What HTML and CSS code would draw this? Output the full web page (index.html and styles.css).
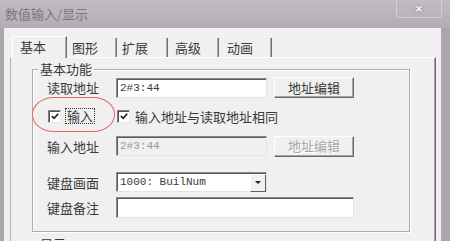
FILE: index.html
```html
<!DOCTYPE html>
<html lang="zh">
  <head>
    <meta charset="UTF-8" />
    <title>数值输入/显示</title>
    <link rel="stylesheet" href="styles.css">
  </head>
  <body>
    <div class="window">
      <div class="titlebar">
        <span class="title">数值输入/显示</span>
        <span class="close">✕</span>
      </div>
      <div class="client">
        <div class="tabs">
          <div class="tab active">基本</div>
          <div class="tab">图形</div>
          <div class="tab">扩展</div>
          <div class="tab">高级</div>
          <div class="tab last">动画</div>
        </div>
        <div class="panel">
          <fieldset class="group">
            <legend>基本功能</legend>
            <div class="group-body">
              <div class="row row-read">
                <span class="label">读取地址</span>
                <input class="field" type="text" value="2#3:44" readonly>
                <button class="btn">地址编辑</button>
              </div>
              <div class="row row-check">
                <div class="check-cell">
                  <span class="check"><svg viewBox="0 0 11 11" width="11" height="11"><polyline points="2,5 4.5,7.5 9,2.5" /></svg></span>
                  <span class="focus">输入</span>
                </div>
                <span class="check"><svg viewBox="0 0 11 11" width="11" height="11"><polyline points="2,5 4.5,7.5 9,2.5" /></svg></span>
                <span class="check-text">输入地址与读取地址相同</span>
                <!-- 红色圈注 -->
                <span class="mark"></span>
              </div>
              <div class="row row-write">
                <span class="label">输入地址</span>
                <input class="field" type="text" value="2#3:44" disabled>
                <button class="btn" disabled>地址编辑</button>
              </div>
              <div class="row row-combo">
                <span class="label">键盘画面</span>
                <div class="combo">
                  <span class="combo-text">1000: BuilNum</span>
                  <span class="combo-arrow"></span>
                </div>
              </div>
              <div class="row row-note">
                <span class="label">键盘备注</span>
                <input class="field wide" type="text" value="">
              </div>
            </div>
          </fieldset>
          <fieldset class="group next">
            <legend>显示</legend>
            <div class="group-body"></div>
          </fieldset>
        </div>
      </div>
    </div>
  </body>
</html>
```

FILE: styles.css
```css
* {
  box-sizing: border-box;
}

body {
  margin: 0;
  width: 450px;
  height: 241px;
  overflow: hidden;
  font-family: "Noto Sans CJK SC", sans-serif;
  font-size: 13px;
  color: #3a3a3a;
}

.window {
  display: flex;
  flex-direction: column;
  height: 241px;
  background: #aca5ae;
}

/* 标题栏 */
.titlebar {
  height: 28px;
  flex: none;
  display: flex;
  justify-content: space-between;
  align-items: flex-start;
  padding-left: 5px;
  background: linear-gradient(#c2bbc3, #b3acb5);
}

.title {
  line-height: 27px;
  color: #7d7781;
}

.close {
  width: 46px;
  height: 18px;
  margin-right: 8px;
  border: 1px solid #d3cdd5;
  border-top: none;
  border-radius: 0 0 4px 4px;
  display: flex;
  align-items: center;
  justify-content: center;
  font-size: 9px;
  font-weight: bold;
  color: #fff;
  text-shadow: 0 0 2px #666;
}

.client {
  flex: 1;
  display: flex;
  flex-direction: column;
  margin: 0 9px 0 4px;
  padding: 7px 5px 0 6px;
  background: #f0f0f0;
}

/* 选项卡 */
.tabs {
  display: flex;
  align-items: flex-end;
  height: 22px;
  padding-left: 2px;
}

.tab {
  width: 50px;
  height: 19px;
  line-height: 19px;
  padding-left: 5px;
  border-right: 1px solid #707070;
  box-shadow: inset -1px 0 0 #a8a8a8;
}

.tab:nth-child(3),
.tab:nth-child(4) {
  width: 51px;
}

.tab:nth-child(4) {
  padding-left: 7px;
}

.tab.last {
  width: 53px;
  padding-left: 8px;
}

.tab.active {
  width: 55px;
  height: 22px;
  line-height: 19px;
  padding-left: 7px;
  border-top: 1px solid #fff;
  border-left: 1px solid #fff;
  margin-bottom: -1px;
  background: #f0f0f0;
  position: relative;
  z-index: 1;
}

.panel {
  flex: 1;
  border-top: 1px solid #fff;
  border-left: 1px solid #b4b4b4;
  border-right: 1px solid #6c6c6c;
  box-shadow: inset -1px 0 0 #a4a4a4;
  padding: 3px 25px 0 21px;
}

/* 分组框 */
.group {
  margin: 0;
  padding: 0;
  min-width: 0;
  border: 1px solid #adadad;
  box-shadow: 1px 1px 0 #fff, inset 1px 1px 0 #fff;
}

.group legend {
  margin-left: 5px;
  padding: 0 2px;
  line-height: 16px;
}

.group-body {
  padding: 0 0 13px 14px;
}

.group.next {
  margin-top: 4px;
}

.row {
  display: flex;
  align-items: center;
}

.label {
  width: 69px;
  flex: none;
}

.row-read {
  height: 21px;
}

.row-check {
  height: 20px;
  margin-top: 8px;
  position: relative;
}

.row-write {
  height: 22px;
  margin-top: 9px;
}

.row-combo {
  height: 20px;
  margin-top: 15px;
}

.row-note {
  height: 21px;
  margin-top: 5px;
}

.field {
  width: 151px;
  height: 20px;
  margin: 0;
  padding: 0 0 0 3px;
  background: #fff;
  border: 1px solid;
  border-color: #8a8a8a #e4e4e4 #e4e4e4 #8a8a8a;
  box-shadow: inset 1px 1px 0 #5a5a5a;
  font-family: "Liberation Mono", monospace;
  font-size: 11px;
  color: #3a3a3a;
  outline: none;
}

.field:disabled {
  background: #f0f0f0;
  color: #9a9a9a;
}

.field.wide {
  width: 238px;
  height: 21px;
}

.btn {
  width: 80px;
  height: 21px;
  margin: 0 0 0 7px;
  padding: 0;
  background: #f0f0f0;
  border: 1px solid;
  border-color: #fff #6a6a6a #6a6a6a #fff;
  box-shadow: inset -1px -1px 0 #a6a6a6;
  font-family: inherit;
  font-size: 13px;
  line-height: 18px;
  color: #3a3a3a;
}

.btn:disabled {
  color: #a6a6a6;
  text-shadow: 1px 1px 0 #fff;
}

/* 复选框 */
.check-cell {
  width: 69px;
  flex: none;
  display: flex;
  align-items: center;
}

.check {
  width: 13px;
  height: 13px;
  margin-left: 1px;
  flex: none;
  display: flex;
  align-items: center;
  justify-content: center;
  background: #fff;
  border: 1px solid;
  border-color: #808080 #e8e8e8 #e8e8e8 #808080;
  box-shadow: inset 1px 1px 0 #505050;
}

.check svg {
  margin: 1px 0 0 1px;
}

.check polyline {
  fill: none;
  stroke: #1a1a1a;
  stroke-width: 1.8;
}

.focus {
  margin-left: 4px;
  padding: 0 1px;
  border: 1px dotted #333;
  line-height: 14px;
}

.check-text {
  margin-left: 5px;
}

.mark {
  position: absolute;
  left: -15px;
  top: -9px;
  width: 83px;
  height: 35px;
  border: 1px solid #e26868;
  border-radius: 22px / 17px;
}

/* 下拉框 */
.combo {
  width: 151px;
  height: 20px;
  display: flex;
  align-items: center;
  justify-content: space-between;
  background: #fff;
  border: 1px solid;
  border-color: #8a8a8a #e4e4e4 #e4e4e4 #8a8a8a;
  box-shadow: inset 1px 1px 0 #5a5a5a;
}

.combo-text {
  padding-left: 3px;
  font-family: "Liberation Mono", monospace;
  font-size: 11px;
}

.combo-arrow {
  width: 16px;
  height: 18px;
  margin-top: 1px;
  display: flex;
  align-items: center;
  justify-content: center;
  background: #f0f0f0;
  border: 1px solid;
  border-color: #fff #5e5e5e #5e5e5e #fff;
}

.combo-arrow::after {
  content: "";
  border-left: 3px solid transparent;
  border-right: 3px solid transparent;
  border-top: 3px solid #222;
}
```
